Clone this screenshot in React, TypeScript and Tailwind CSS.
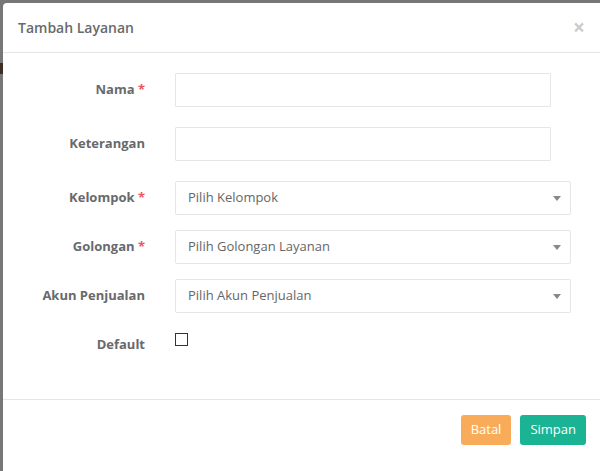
const font = { fontFamily: '"Open Sans", "Noto Sans", sans-serif' }

function Label({ text, required }: { text: string; required?: boolean }) {
  return (
    <div className="w-[157px] shrink-0 pr-[15px] pt-[6px] text-right text-[13px] leading-[20px] font-bold text-[#676a6c]">
      {text}
      {required && <span className="text-[#ed5565]"> *</span>}
    </div>
  )
}

function TextRow({ label, required }: { label: string; required?: boolean }) {
  return (
    <div className="flex mb-[20px]">
      <Label text={label} required={required} />
      <div className="pl-[15px]">
        <div className="w-[376px] h-[34px] border border-[#e5e6e7] rounded-[1px] bg-white" />
      </div>
    </div>
  )
}

function SelectRow({ label, placeholder, required }: { label: string; placeholder: string; required?: boolean }) {
  return (
    <div className="flex mb-[15px]">
      <Label text={label} required={required} />
      <div className="pl-[15px]">
        <div className="w-[396px] h-[34px] border border-[#e5e6e7] rounded-[2px] bg-white flex items-center justify-between pl-[12px] pr-[9px]">
          <span className="text-[13px] text-[#666]">{placeholder}</span>
          <span className="w-0 h-0 border-l-[4px] border-r-[4px] border-t-[5px] border-l-transparent border-r-transparent border-t-[#888]" />
        </div>
      </div>
    </div>
  )
}

export default function App() {
  return (
    <div className="h-[471px] w-[600px] overflow-hidden bg-[#777] flex" style={font}>
      <div className="w-[3px] shrink-0 flex flex-col">
        <div className="h-[63px]" />
        <div className="h-[11px] bg-[#3b2f25]" />
      </div>
      <div className="flex-1 mt-[3px] bg-white rounded-tl-[4px] flex flex-col">
        <div className="h-[50px] border-b border-[#e5e5e5] flex items-center justify-between px-[15px]">
          <h4 className="text-[14px] font-semibold text-[#676a6c]">Tambah Layanan</h4>
          <span className="text-[21px] font-bold leading-none text-black opacity-20">×</span>
        </div>
        <div className="pt-[20px] h-[347px] border-b border-[#e5e5e5]">
          <TextRow label="Nama" required />
          <TextRow label="Keterangan" />
          <SelectRow label="Kelompok" placeholder="Pilih Kelompok" required />
          <SelectRow label="Golongan" placeholder="Pilih Golongan Layanan" required />
          <SelectRow label="Akun Penjualan" placeholder="Pilih Akun Penjualan" />
          <div className="flex">
            <Label text="Default" />
            <div className="pl-[15px] pt-[5px]">
              <div className="w-[13px] h-[13px] border border-[#333] bg-white" />
            </div>
          </div>
        </div>
        <div className="flex justify-end gap-[9px] px-[14px] pt-[15px]">
          <button className="h-[30px] px-[10px] rounded-[3px] bg-[#f8ac59] text-white text-[13px]">Batal</button>
          <button className="h-[30px] px-[10px] rounded-[3px] bg-[#1ab394] text-white text-[13px]">Simpan</button>
        </div>
      </div>
    </div>
  )
}
